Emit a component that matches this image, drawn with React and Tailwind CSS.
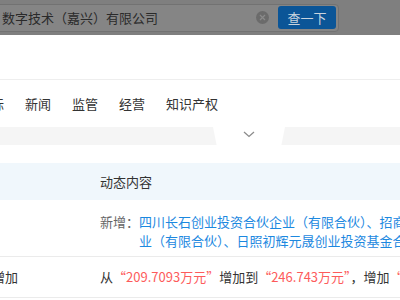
const font = { fontFamily: '"Noto Sans CJK SC", "Noto Sans", sans-serif' }

function SearchBar() {
  return (
    <div className="h-[35px] bg-[#7f7f7f] flex items-center">
      <div className="-ml-[20px] w-[359px] h-[28px] border border-[#727272] bg-[#858585] rounded-r-[4px] flex items-center pr-[2px]">
        <div className="flex-1 pl-[21px] text-[13px] text-[#2a2a2a] whitespace-nowrap overflow-hidden">
          数字技术（嘉兴）有限公司
        </div>
        <div className="w-[13px] h-[13px] rounded-full bg-[#6b6b6b] flex items-center justify-center mr-[9px]">
          <svg width="7" height="7" viewBox="0 0 7 7">
            <path d="M1 1 L6 6 M6 1 L1 6" stroke="#8a8a8a" strokeWidth="1.3" />
          </svg>
        </div>
        <button className="w-[58px] h-[23px] rounded-[3px] bg-[#0b5597] text-[#c9d4de] text-[13px] flex items-center justify-center">
          查一下
        </button>
      </div>
    </div>
  )
}

function Tabs() {
  const tabs = ['商标', '新闻', '监管', '经营', '知识产权']
  return (
    <div className="mt-[44px] border-t border-[#eeeeee] h-[48px] flex items-center">
      <div className="-ml-[22px] flex gap-[21px] text-[13px] text-[#333333]">
        {tabs.map((t) => (
          <span key={t} className="whitespace-nowrap">{t}</span>
        ))}
      </div>
    </div>
  )
}

function Band() {
  return (
    <div className="h-[18px] bg-[#f5f5f5] flex">
      <div className="ml-[213px] w-[72px] h-[18px] bg-white [clip-path:polygon(0_0,100%_0,95%_100%,5%_100%)] flex justify-center pt-[4px]">
        <svg width="12" height="7" viewBox="0 0 12 7">
          <path d="M1 1 L6 5.5 L11 1" fill="none" stroke="#8c8c8c" strokeWidth="1.3" />
        </svg>
      </div>
    </div>
  )
}

export default function App() {
  return (
    <div className="w-[400px] h-[300px] overflow-hidden bg-white" style={font}>
      <SearchBar />
      <Tabs />
      <Band />
      <div className="mt-[18px]">
        <div className="h-[37px] bg-[#f0f7fc] flex items-center">
          <div className="w-[100px] shrink-0" />
          <div className="text-[13px] text-[#333333]">动态内容</div>
        </div>
        <div className="h-[57px] border-b border-[#ebebeb] flex pt-[12px]">
          <div className="w-[100px] shrink-0" />
          <div className="flex text-[13px] leading-[19px] whitespace-nowrap">
            <span className="text-[#666666]">新增：</span>
            <div className="text-[#1c88df]">
              <div>四川长石创业投资合伙企业（有限合伙）、招商局创新投资合伙企</div>
              <div>业（有限合伙）、日照初辉元晟创业投资基金合伙企业（有限合伙）</div>
            </div>
          </div>
        </div>
        <div className="h-[41px] border-b border-[#ebebeb] flex items-center text-[13px] whitespace-nowrap">
          <div className="w-[100px] shrink-0 text-[#333333]">
            <span className="-ml-[8px]">增加</span>
          </div>
          <div className="text-[#333333]">
            从<span className="text-[#fd5b5b]">“209.7093万元”</span>增加到<span className="text-[#fd5b5b]">“246.743万元”</span>，增加<span className="text-[#fd5b5b]">“37.0337万元”</span>
          </div>
        </div>
      </div>
    </div>
  )
}
